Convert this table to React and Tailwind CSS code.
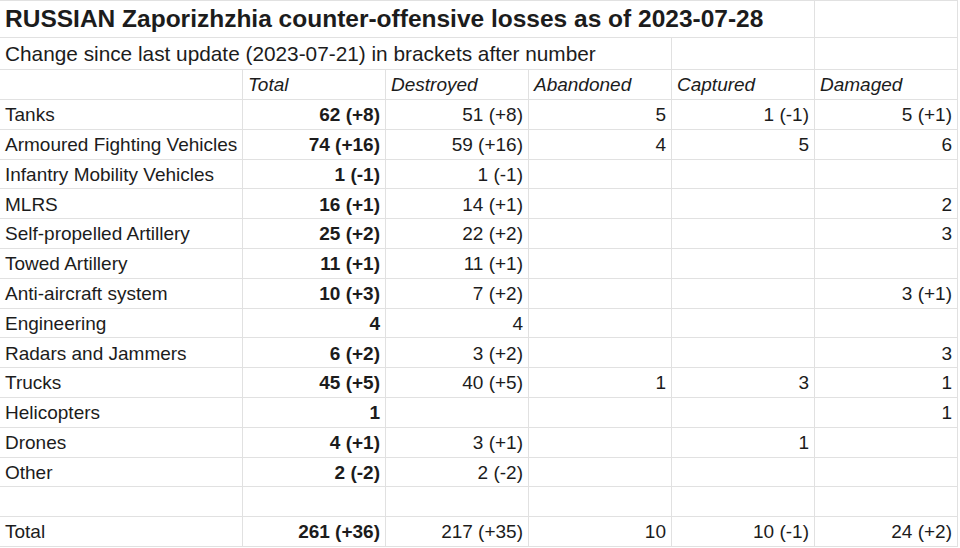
import React from 'react'

const ROWS = [
  ['Tanks', '62 (+8)', '51 (+8)', '5', '1 (-1)', '5 (+1)'],
  ['Armoured Fighting Vehicles', '74 (+16)', '59 (+16)', '4', '5', '6'],
  ['Infantry Mobility Vehicles', '1 (-1)', '1 (-1)', '', '', ''],
  ['MLRS', '16 (+1)', '14 (+1)', '', '', '2'],
  ['Self-propelled Artillery', '25 (+2)', '22 (+2)', '', '', '3'],
  ['Towed Artillery', '11 (+1)', '11 (+1)', '', '', ''],
  ['Anti-aircraft system', '10 (+3)', '7 (+2)', '', '', '3 (+1)'],
  ['Engineering', '4', '4', '', '', ''],
  ['Radars and Jammers', '6 (+2)', '3 (+2)', '', '', '3'],
  ['Trucks', '45 (+5)', '40 (+5)', '1', '3', '1'],
  ['Helicopters', '1', '', '', '', '1'],
  ['Drones', '4 (+1)', '3 (+1)', '', '1', ''],
  ['Other', '2 (-2)', '2 (-2)', '', '', ''],
  ['', '', '', '', '', ''],
  ['Total', '261 (+36)', '217 (+35)', '10', '10 (-1)', '24 (+2)'],
]

const HEADERS = ['', 'Total', 'Destroyed', 'Abandoned', 'Captured', 'Damaged']

const cell = 'border-r border-b border-[#e1e1e1] flex items-center overflow-hidden whitespace-nowrap'

export default function App() {
  return (
    <div
      className="w-[960px] h-[548px] bg-white text-[#1c1c1c] overflow-hidden"
      style={{ fontFamily: '"Liberation Sans", Arial, sans-serif' }}
    >
      <div className="grid grid-cols-[243px_143px_143px_143px_143px_143px] w-[958px] border-t border-[#e1e1e1]">
        {/* title row */}
        <div className={`${cell} col-span-5 h-[37px] pl-[5px] text-[24.5px] font-bold`}>
          RUSSIAN Zaporizhzhia counter-offensive losses as of 2023-07-28
        </div>
        <div className={`${cell} h-[37px]`} />

        {/* subtitle row */}
        <div className={`${cell} col-span-4 h-[32px] pl-[5px] text-[20.8px]`}>
          Change since last update (2023-07-21) in brackets after number
        </div>
        <div className={`${cell} h-[32px]`} />
        <div className={`${cell} h-[32px]`} />

        {/* header row */}
        {HEADERS.map((h, i) => (
          <div key={i} className={`${cell} h-[30px] pl-[5px] pt-[2px] text-[19px] italic`}>
            {h}
          </div>
        ))}

        {ROWS.map((r, ri) =>
          r.map((v, ci) => (
            <div
              key={`${ri}-${ci}`}
              className={`${cell} h-[29.8px] pt-[2px] text-[19px] ${
                ci === 0 ? 'pl-[5px]' : 'justify-end pr-[5px]'
              } ${ci === 1 ? 'font-bold' : ''}`}
            >
              {v}
            </div>
          ))
        )}
      </div>
    </div>
  )
}
